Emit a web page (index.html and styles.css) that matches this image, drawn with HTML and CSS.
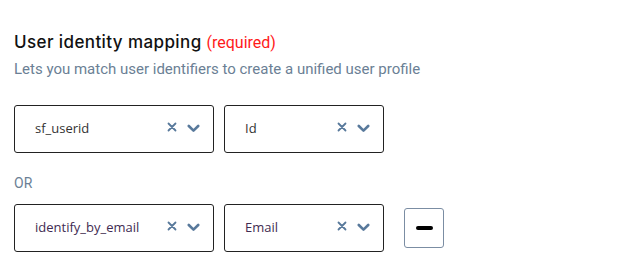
FILE: index.html
```html
<!DOCTYPE html>
<html lang="en">
<head>
  <meta charset="UTF-8">
  <title>User identity mapping</title>
  <link rel="stylesheet" href="styles.css">
</head>
<body>

  <!-- ====== Identity Mapping Section ====== -->
  <section class="mapping">
    <h3 class="mapping-title">User identity mapping <span class="required">(required)</span></h3>
    <p class="mapping-desc">Lets you match user identifiers to create a unified user profile</p>

    <div class="mapping-row">
      <div class="select select-wide">
        <span class="select-value">sf_userid</span>
        <span class="select-icons">
          <svg class="icon-clear" width="10" height="10" viewBox="0 0 10 10"><path d="M1.5 1.5L8.5 8.5M8.5 1.5L1.5 8.5" stroke="currentColor" stroke-width="1.8" stroke-linecap="round"/></svg>
          <svg class="icon-chevron" width="13" height="9" viewBox="0 0 13 9"><path d="M1.8 2l4.7 4.6L11.2 2" fill="none" stroke="currentColor" stroke-width="2.6" stroke-linecap="round" stroke-linejoin="round"/></svg>
        </span>
      </div>
      <div class="select select-narrow">
        <span class="select-value">Id</span>
        <span class="select-icons">
          <svg class="icon-clear" width="10" height="10" viewBox="0 0 10 10"><path d="M1.5 1.5L8.5 8.5M8.5 1.5L1.5 8.5" stroke="currentColor" stroke-width="1.8" stroke-linecap="round"/></svg>
          <svg class="icon-chevron" width="13" height="9" viewBox="0 0 13 9"><path d="M1.8 2l4.7 4.6L11.2 2" fill="none" stroke="currentColor" stroke-width="2.6" stroke-linecap="round" stroke-linejoin="round"/></svg>
        </span>
      </div>
    </div>

    <div class="mapping-or">OR</div>

    <div class="mapping-row">
      <div class="select select-wide">
        <span class="select-value alt">identify_by_email</span>
        <span class="select-icons">
          <svg class="icon-clear" width="10" height="10" viewBox="0 0 10 10"><path d="M1.5 1.5L8.5 8.5M8.5 1.5L1.5 8.5" stroke="currentColor" stroke-width="1.8" stroke-linecap="round"/></svg>
          <svg class="icon-chevron" width="13" height="9" viewBox="0 0 13 9"><path d="M1.8 2l4.7 4.6L11.2 2" fill="none" stroke="currentColor" stroke-width="2.6" stroke-linecap="round" stroke-linejoin="round"/></svg>
        </span>
      </div>
      <div class="select select-narrow">
        <span class="select-value alt">Email</span>
        <span class="select-icons">
          <svg class="icon-clear" width="10" height="10" viewBox="0 0 10 10"><path d="M1.5 1.5L8.5 8.5M8.5 1.5L1.5 8.5" stroke="currentColor" stroke-width="1.8" stroke-linecap="round"/></svg>
          <svg class="icon-chevron" width="13" height="9" viewBox="0 0 13 9"><path d="M1.8 2l4.7 4.6L11.2 2" fill="none" stroke="currentColor" stroke-width="2.6" stroke-linecap="round" stroke-linejoin="round"/></svg>
        </span>
      </div>
      <button class="remove-btn" type="button"><span class="remove-bar"></span></button>
    </div>
  </section>

</body>
</html>
```

FILE: styles.css
```css
/* ====== General Styles ====== */
body {
  margin: 0;
  background: #fff;
  font-family: Roboto, Arial, sans-serif;
}

.mapping {
  padding: 30px 14px 0;
}

/* ====== Heading ====== */
.mapping-title {
  margin: 0;
  font-family: Inter, "Noto Sans", sans-serif;
  font-size: 17px;
  font-weight: 500;
  letter-spacing: 0.4px;
  line-height: 24px;
  color: #111;
}

.required {
  font-family: Roboto, Arial, sans-serif;
  font-size: 16px;
  font-weight: 400;
  letter-spacing: 0;
  color: #ff1a1a;
}

.mapping-desc {
  margin: 4px 0 0;
  font-size: 15px;
  line-height: 20px;
  color: #6b7f95;
}

/* ====== Rows ====== */
.mapping-row {
  display: flex;
  align-items: center;
  gap: 10px;
  margin-top: 26px;
}

.mapping-or {
  margin-top: 20px;
  font-size: 14px;
  line-height: 20px;
  color: #6b7f95;
}

.mapping-or + .mapping-row {
  margin-top: 11px;
}

/* ====== Select boxes ====== */
.select {
  box-sizing: border-box;
  height: 48px;
  display: flex;
  align-items: center;
  justify-content: space-between;
  padding: 0 13px 0 20px;
  border: 1px solid #222;
  border-radius: 3px;
}

.select-wide {
  width: 200px;
}

.select-narrow {
  width: 160px;
}

.select-value {
  font-family: "Open Sans", sans-serif;
  font-size: 13px;
  line-height: 18px;
  margin-top: -2px;
  color: #333;
}

.select-value.alt {
  color: #3f2c52;
}

.select-icons {
  display: flex;
  align-items: center;
  gap: 10px;
  margin-top: -2px;
  color: #58799b;
}

.icon-clear {
  margin-top: -2px;
}

/* ====== Remove button ====== */
.remove-btn {
  box-sizing: border-box;
  width: 40px;
  height: 40px;
  margin-left: 10px;
  padding: 0;
  display: flex;
  align-items: center;
  justify-content: center;
  background: #fff;
  border: 1px solid #7b8da3;
  border-radius: 3px;
  cursor: pointer;
}

.remove-bar {
  width: 17px;
  height: 4px;
  border-radius: 2px;
  background: #000;
}
```
